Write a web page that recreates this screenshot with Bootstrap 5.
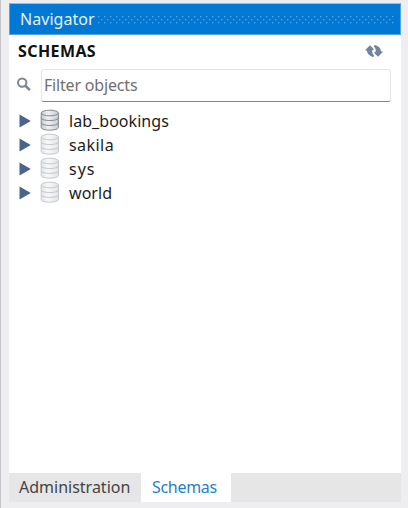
<!DOCTYPE html>
<html lang="en">
<head>
<meta charset="utf-8">
<meta name="viewport" content="width=device-width, initial-scale=1">
<title>Navigator</title>
<link href="https://cdn.jsdelivr.net/npm/bootstrap@5.3.0/dist/css/bootstrap.min.css" rel="stylesheet">
<style>
body{height:508px;background:#eeeef0;font-family:"Noto Sans","Open Sans",sans-serif;font-size:16px;line-height:24px;color:#1c1c1c;overflow:hidden}
.app-shell{height:508px;border-left:1px solid #c4c4c8;padding:3px 7px 6px 8px}
.title-strip{height:32px;flex:none;background:#0078d4;border:1px solid #55a3df;border-top-color:#8dbfe6;color:#e6f2fc;padding:0 6px 0 10px}
.title-strip .caption{letter-spacing:.05px;line-height:28px}
.grip{height:9px;flex:1;margin-left:2px}
.heading-row{height:32px;padding:0 18px 0 9px}
.heading-row h1{font-size:16px;font-weight:700;line-height:32px;color:#111;letter-spacing:.4px}
.filter-row{height:35px;padding:2px 10px 0 7px}
.filter-box{height:33px;margin-left:9px;border:1px solid #e6e6e6;border-bottom:1.5px solid #858585;border-radius:3px;padding:0 2px 2px;font-size:16px;letter-spacing:-.18px;line-height:28px;color:#6c6c6c;background:#fff;min-width:0}
.filter-box::placeholder{color:#707070;opacity:1}
.filter-box:focus{outline:0}
.tree{padding:7px 0 0 10px}
.tree li{height:24px;color:#1c1c1c}
.tree svg{flex:none}
.tree .db{margin:-3px 9px 0 9px}
.tree .roomy{letter-spacing:.45px}
.tree .wide{letter-spacing:1px}
.tree .snug{letter-spacing:.05px}
.tab-strip{height:29px;flex:none;background:#e6e6e6}
.tab-strip .tab{line-height:27px;padding:0 10px;border:0;background:none;color:#444;text-align:left}
.tab-strip .tab.active{background:#fff;color:#2480cf;padding-left:11px;letter-spacing:-.3px}
.w-admin{width:132px}.w-schemas{width:90px}
</style>
</head>
<body>
<svg width="0" height="0" class="position-absolute" aria-hidden="true">
<defs>
<linearGradient id="metal"><stop offset="0" stop-color="#c6c9cf"/><stop offset=".4" stop-color="#eff0f2"/><stop offset="1" stop-color="#c8ccd2"/></linearGradient>
<linearGradient id="pale"><stop offset="0" stop-color="#e3e5e8"/><stop offset=".4" stop-color="#f8f8f9"/><stop offset="1" stop-color="#e3e5e8"/></linearGradient>
<symbol id="cyl" viewBox="0 0 20 22"><path d="M1.2 4v14.6c0 3.4 17.2 3.4 17.2 0V4"/><ellipse cx="9.8" cy="4" rx="8.6" ry="2.8"/><path fill="none" d="M1.2 8.9c0 3.5 17.2 3.5 17.2 0M1.2 13.8c0 3.5 17.2 3.5 17.2 0"/></symbol>
<symbol id="tri" viewBox="0 0 12 14"><path d="M.5.5 11.8 7 .5 13.5z" fill="#4a658c"/></symbol>
</defs>
</svg>
<div class="app-shell">
<main class="d-flex flex-column h-100 bg-white w-100">
<header class="title-strip d-flex align-items-center">
<span class="caption">Navigator</span>
<svg class="grip"><defs><pattern id="dots" width="6" height="9" patternUnits="userSpaceOnUse"><g fill="#59a8e3"><rect x="1" y="1" width="1.3" height="1.3"/><rect x="4" y="4" width="1.3" height="1.3"/><rect x="1" y="7" width="1.3" height="1.3"/></g></pattern></defs><rect width="100%" height="9" fill="url(#dots)"/></svg>
</header>
<section class="flex-grow-1">
<div class="heading-row d-flex align-items-center justify-content-between">
<h1 class="m-0">SCHEMAS</h1>
<svg width="18" height="14" viewBox="0 0 18 14" fill="#71859d"><path d="M0 6.2 5 1.3 9 5.2 7.3 6.4C7 8.4 7.6 10 9 11.3L8.6 13C5 12.4 2.2 10 2 6.8z"/><path d="M18 7.8 13 12.7 9 8.8l1.7-1.2C11 5.6 10.4 4 9 2.7L9.4 1c3.6.6 6.4 3 6.6 6.2z"/></svg>
</div>
<div class="filter-row d-flex">
<svg class="mt-2 flex-shrink-0" width="16" height="16" viewBox="0 0 16 16" fill="none" stroke="#798590"><circle cx="6.2" cy="5.6" r="4.2" stroke-width="2"/><path d="m9.5 8.9 4.4 4.2" stroke-width="2.6"/></svg>
<input class="filter-box flex-grow-1" type="text" placeholder="Filter objects" aria-label="Filter objects">
</div>
<ul class="tree list-unstyled m-0">
<li class="d-flex align-items-center"><svg width="12" height="14"><use href="#tri"/></svg><svg class="db" width="20" height="22" fill="url(#metal)" stroke="#858a93"><use href="#cyl"/></svg><span class="snug">lab_bookings</span></li>
<li class="d-flex align-items-center"><svg width="12" height="14"><use href="#tri"/></svg><svg class="db" width="20" height="22" fill="url(#pale)" stroke="#c6c8cb"><use href="#cyl"/></svg><span class="roomy">sakila</span></li>
<li class="d-flex align-items-center"><svg width="12" height="14"><use href="#tri"/></svg><svg class="db" width="20" height="22" fill="url(#pale)" stroke="#c6c8cb"><use href="#cyl"/></svg><span class="wide">sys</span></li>
<li class="d-flex align-items-center"><svg width="12" height="14"><use href="#tri"/></svg><svg class="db" width="20" height="22" fill="url(#pale)" stroke="#c6c8cb"><use href="#cyl"/></svg><span class="snug">world</span></li>
</ul>
</section>
<nav class="tab-strip d-flex">
<button class="tab w-admin" type="button">Administration</button>
<button class="tab active w-schemas" type="button">Schemas</button>
</nav>
</main>
</div>
<script src="https://cdn.jsdelivr.net/npm/bootstrap@5.3.0/dist/js/bootstrap.bundle.min.js"></script>
</body>
</html>
